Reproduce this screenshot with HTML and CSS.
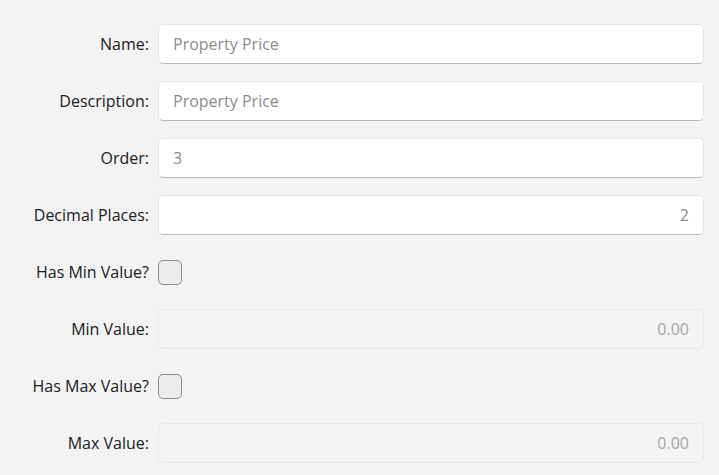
FILE: index.html
```html
<!DOCTYPE html>
<html>
<head>
<meta charset="utf-8">
<link rel="stylesheet" href="styles.css">
</head>
<body>
<div class="form">
  <label class="lbl">Name:</label>
  <div class="field"><input class="box" placeholder="Property Price"></div>

  <label class="lbl">Description:</label>
  <div class="field"><input class="box" placeholder="Property Price"></div>

  <label class="lbl">Order:</label>
  <div class="field"><input class="box" value="3"></div>

  <label class="lbl">Decimal Places:</label>
  <div class="field"><input class="box num" value="2"></div>

  <label class="lbl">Has Min Value?</label>
  <div class="field"><span class="check"></span></div>

  <label class="lbl">Min Value:</label>
  <div class="field"><input class="box num" placeholder="0.00" disabled></div>

  <label class="lbl">Has Max Value?</label>
  <div class="field"><span class="check"></span></div>

  <label class="lbl">Max Value:</label>
  <div class="field"><input class="box num" placeholder="0.00" disabled></div>
</div>
</body>
</html>
```
FILE: styles.css
```css
html, body {
  margin: 0;
  padding: 0;
  background: #f3f3f3;
  font-family: "Open Sans", "Noto Sans", sans-serif;
}
.form {
  display: grid;
  grid-template-columns: 150px 546px;
  column-gap: 8px;
  row-gap: 17px;
  grid-auto-rows: 40px;
  padding-top: 24px;
}
.lbl {
  display: flex;
  align-items: center;
  justify-content: flex-end;
  padding-right: 1px;
  font-size: 16px;
  color: #202020;
  white-space: nowrap;
}
.field {
  display: flex;
  align-items: center;
}
.box {
  box-sizing: border-box;
  width: 100%;
  height: 40px;
  margin: 0;
  padding: 0 14px;
  border: 1px solid #e6e6e6;
  border-bottom-color: #b8b8b8;
  border-radius: 5px;
  background: #ffffff;
  font-family: inherit;
  font-size: 16px;
  color: #8a8a8a;
  outline: none;
}
.box::placeholder {
  color: #8c8c8c;
}
.num {
  text-align: right;
}
.box:disabled {
  background: #f4f4f4;
  border: 1px solid #e8e8e8;
}
.box:disabled::placeholder {
  color: #a4a4a4;
}
.check {
  box-sizing: border-box;
  width: 24px;
  height: 25px;
  border: 1px solid #8b8b8b;
  border-radius: 5px;
  background: #ececec;
}
```
